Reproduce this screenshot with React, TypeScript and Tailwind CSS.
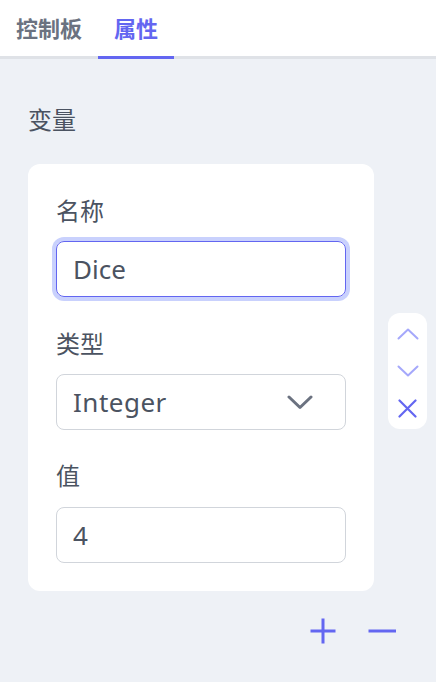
import React from "react";

export default function App() {
  const font = { fontFamily: '"Noto Sans", "Noto Sans CJK SC", sans-serif' };
  return (
    <div style={font} className="w-[436px] h-[682px] bg-[#eef1f6] text-[#4b5361] overflow-hidden">
      <div className="flex h-[59px] bg-white border-b-[3px] border-[#dfe2e7]">
        <div className="px-4 h-[59px] -mb-[3px] border-b-[3px] border-transparent flex items-center text-[22px] font-bold text-[#6b7280]">
          控制板
        </div>
        <div className="px-4 h-[59px] -mb-[3px] border-b-[3px] border-[#6366f1] flex items-center text-[22px] font-bold text-[#6366f1]">
          属性
        </div>
      </div>

      <div className="pl-7 pr-[9px] pt-[45px]">
        <div className="text-[24px] leading-[32px] text-[#4b5361]">变量</div>

        <div className="flex items-center gap-[14px] mt-[28px]">
          <div className="w-[346px] bg-white rounded-xl px-7 pt-[31px] pb-7">
            <div className="text-[24px] leading-[32px]">名称</div>
            <div className="mt-[14px] h-[56px] rounded-lg border border-[#6366f1] ring-4 ring-[#c9d1fd] flex items-center px-4 text-[26px]">
              Dice
            </div>
            <div className="mt-[31px] text-[24px] leading-[32px]">类型</div>
            <div className="mt-[14px] h-[56px] rounded-lg border border-[#d1d5db] flex items-center justify-between pl-4 pr-[32px] text-[26px]">
              <span className="tracking-[0.5px]">Integer</span>
              <svg width="26" height="15" viewBox="0 0 26 15" fill="none">
                <path d="M2 2L13 12.5L24 2" stroke="#6b7280" strokeWidth="3" strokeLinecap="round" strokeLinejoin="round" />
              </svg>
            </div>
            <div className="mt-[30px] text-[24px] leading-[32px]">值</div>
            <div className="mt-[15px] h-[56px] rounded-lg border border-[#d1d5db] flex items-center px-4 text-[26px]">
              4
            </div>
          </div>

          <div className="w-[39px] h-[116px] bg-white rounded-xl flex flex-col items-center pt-[15px] mb-[14px]">
            <svg width="22" height="12" viewBox="0 0 22 12" fill="none">
              <path d="M1.5 10.5L11 1.5L20.5 10.5" stroke="#a5a8fb" strokeWidth="2" strokeLinecap="round" strokeLinejoin="round" />
            </svg>
            <svg className="mt-[25px]" width="22" height="12" viewBox="0 0 22 12" fill="none">
              <path d="M1.5 1.5L11 10.5L20.5 1.5" stroke="#a5a8fb" strokeWidth="2" strokeLinecap="round" strokeLinejoin="round" />
            </svg>
            <svg className="mt-[22px]" width="19" height="19" viewBox="0 0 19 19" fill="none">
              <path d="M1.5 1.5L17.5 17.5M17.5 1.5L1.5 17.5" stroke="#6366f1" strokeWidth="2.2" strokeLinecap="round" />
            </svg>
          </div>
        </div>

        <div className="flex justify-end items-center gap-[31px] pr-[31px] mt-[26px]">
          <svg width="28" height="28" viewBox="0 0 28 28" fill="none">
            <path d="M14 1.5V26.5M1.5 14H26.5" stroke="#6366f1" strokeWidth="3" />
          </svg>
          <svg width="28" height="28" viewBox="0 0 28 28" fill="none">
            <path d="M0.5 14H28" stroke="#6366f1" strokeWidth="3" />
          </svg>
        </div>
      </div>
    </div>
  );
}
